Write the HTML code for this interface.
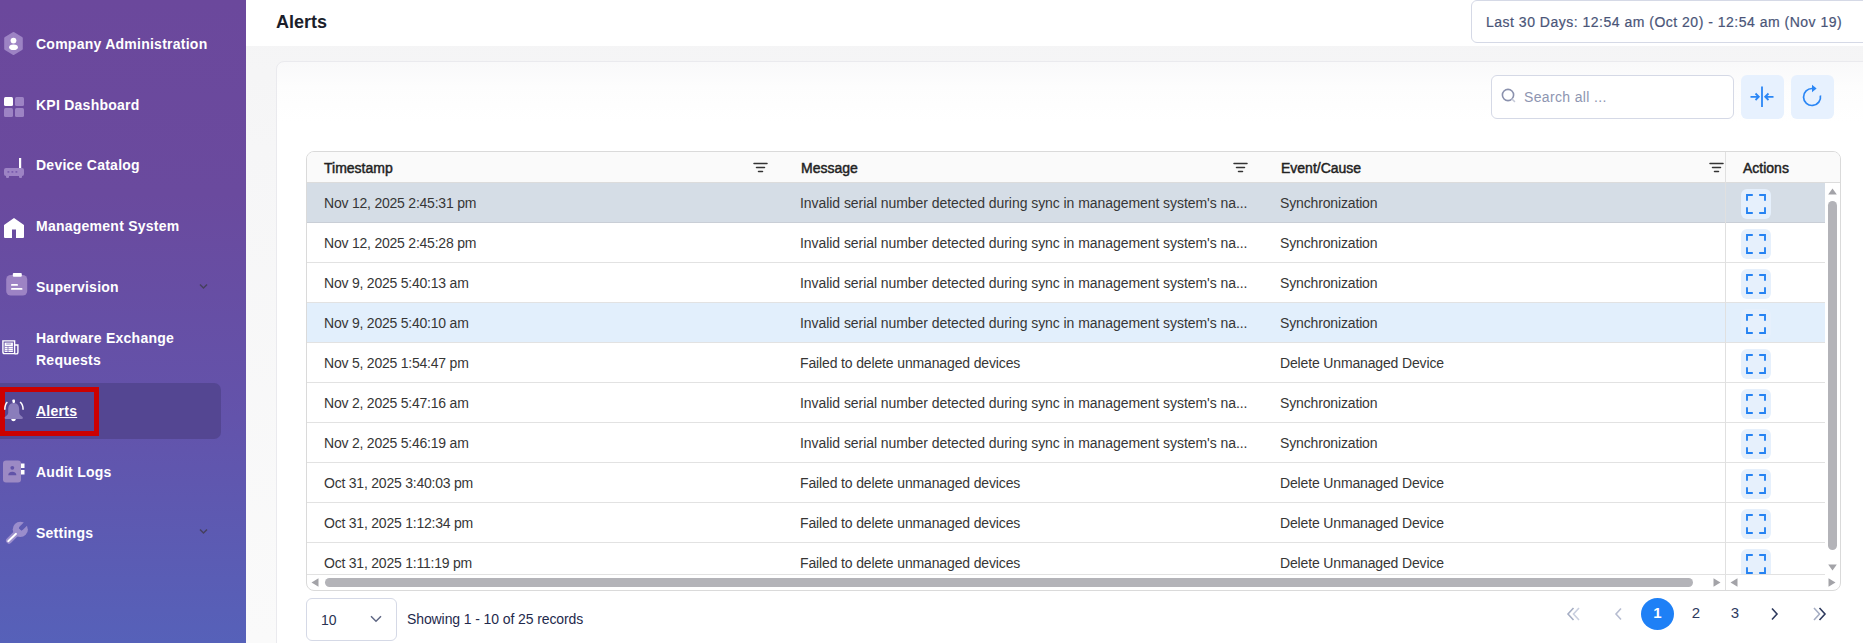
<!DOCTYPE html>
<html><head><meta charset="utf-8">
<style>
*{box-sizing:border-box;margin:0;padding:0}
html,body{width:1863px;height:643px;overflow:hidden;background:linear-gradient(180deg,#f4f4f5 0,#f6f6f7 150px,#fafafa 643px);font-family:"Liberation Sans",sans-serif}
.abs{position:absolute}
#sb{position:absolute;left:0;top:0;width:246px;height:643px;background:linear-gradient(180deg,#6b489c 0%,#6a4a9e 30%,#6353ab 65%,#5661b9 100%)}
.nav{position:absolute;left:36px;color:#fff;font-weight:bold;font-size:14px;line-height:22px;white-space:nowrap;letter-spacing:0.25px}
.ico{position:absolute}
#hdr{position:absolute;left:246px;top:0;width:1617px;height:46px;background:#fff}
#title{position:absolute;left:276px;top:11px;font-size:18px;font-weight:bold;color:#1b1e2b;line-height:22px}
#range{position:absolute;left:1471px;top:0;width:420px;height:43px;border:1px solid #d5d9e6;border-radius:6px;background:#fff;color:#4a5578;font-size:14px;line-height:42px;padding-left:14px;white-space:nowrap;letter-spacing:0.5px;-webkit-text-stroke:0.2px #4a5578}
#card{position:absolute;left:276px;top:61px;width:1620px;height:620px;background:linear-gradient(180deg,#f9f9fa 0,#fdfdfd 25px,#fff 60px);border:1px solid #eaeaee;border-radius:8px}
#search{position:absolute;left:1491px;top:75px;width:243px;height:44px;border:1px solid #d5d9e6;border-radius:6px;background:#fff}
.tbtn{position:absolute;top:75px;width:43px;height:44px;background:#e7f1fe;border-radius:6px}
#tbl{position:absolute;left:306px;top:151px;width:1535px;height:440px;border:1px solid #dadada;border-radius:8px;background:#fff;overflow:hidden}
.th{position:absolute;top:0;height:31px;background:#fafafa;border-bottom:1px solid #dcdcdc}
.tht{position:absolute;top:8px;font-size:14px;font-weight:normal;color:#222;line-height:16px;white-space:nowrap;letter-spacing:0;-webkit-text-stroke:0.45px #222}
.row{position:absolute;left:0;width:1518px;height:40px;border-bottom:1px solid #e2e2e2}
.cell{position:absolute;top:12px;font-size:14px;color:#363636;line-height:16px;white-space:nowrap}
.act{position:absolute;left:1434px;top:6px;width:30px;height:30px;background:#e6f0fc;border-radius:6px}
</style></head><body>
<div id="sb">
  <!-- Company Administration -->
  <svg class="ico" style="left:4px;top:32px" width="19" height="23" viewBox="0 0 19 23"><path d="M9.5 1.6 L17.3 6.2 V16.8 L9.5 21.4 L1.7 16.8 V6.2 Z" fill="#9d83c4" stroke="#9d83c4" stroke-linejoin="round" stroke-width="3"/><circle cx="9.5" cy="8.6" r="2.9" fill="#fff"/><ellipse cx="9.5" cy="15.2" rx="4.4" ry="2.8" fill="#fff"/></svg>
  <div class="nav" style="top:33px">Company Administration</div>
  <!-- KPI -->
  <svg class="ico" style="left:4px;top:97px" width="20" height="20" viewBox="0 0 20 20"><rect x="0" y="0" width="9" height="9" rx="1.5" fill="#fff"/><rect x="11" y="0" width="9" height="9" rx="1.5" fill="#9d83c4"/><rect x="0" y="11" width="9" height="9" rx="1.5" fill="#9d83c4"/><rect x="11" y="11" width="9" height="9" rx="1.5" fill="#9d83c4"/></svg>
  <div class="nav" style="top:94px">KPI Dashboard</div>
  <!-- Device -->
  <svg class="ico" style="left:4px;top:157px" width="20" height="22" viewBox="0 0 20 22"><rect x="15" y="1" width="2.2" height="10" fill="#fff"/><rect x="0" y="11" width="20" height="8" rx="2" fill="#9d83c4"/><rect x="2" y="18" width="3" height="3" rx="1" fill="#9d83c4"/><rect x="15" y="18" width="3" height="3" rx="1" fill="#9d83c4"/><rect x="3.5" y="14" width="1.8" height="1.8" fill="#7a5cae"/><rect x="7.5" y="14" width="1.8" height="1.8" fill="#7a5cae"/><rect x="11.5" y="14" width="1.8" height="1.8" fill="#7a5cae"/></svg>
  <div class="nav" style="top:154px">Device Catalog</div>
  <!-- Management -->
  <svg class="ico" style="left:4px;top:217px" width="20" height="21" viewBox="0 0 20 21"><path d="M10 1 L20 8 V20 Q20 21 19 21 H12 V12.5 H8 V21 H1 Q0 21 0 20 V8 Z" fill="#fff"/></svg>
  <div class="nav" style="top:215px">Management System</div>
  <!-- Supervision -->
  <svg class="ico" style="left:6px;top:273px" width="22" height="23" viewBox="0 0 22 23"><rect x="0.2" y="2" width="21" height="20.5" rx="4.5" fill="#9d83c4"/><rect x="6.8" y="0" width="9" height="3.8" rx="1" fill="#fff"/><rect x="5" y="11" width="7" height="1.8" rx="0.9" fill="#fff"/><rect x="5" y="15" width="11.5" height="1.8" rx="0.9" fill="#fff"/></svg>
  <div class="nav" style="top:276px">Supervision</div>
  <svg class="ico" style="left:199px;top:283px" width="9" height="7" viewBox="0 0 9 7"><path d="M1 1.5 L4.5 5 L8 1.5" fill="none" stroke="#46405e" stroke-width="1.5"/></svg>
  <!-- Hardware -->
  <svg class="ico" style="left:2px;top:340px" width="17" height="15" viewBox="0 0 17 15"><path d="M0.9 0.9 H12.6 V13.6 H2.4 Q0.9 13.6 0.9 12.1 Z" fill="none" stroke="#fff" stroke-width="1.4"/><path d="M12.6 5 H15.9 V12.4 Q15.9 13.9 14.4 13.9 H12.6" fill="none" stroke="#fff" stroke-width="1.4"/><rect x="2.6" y="2.6" width="8.3" height="9.4" fill="#fff"/><rect x="4.2" y="3.6" width="5" height="0.9" fill="#8d7bc0"/><rect x="2.6" y="6.1" width="8.3" height="0.7" fill="#7a68b3"/><rect x="2.6" y="8.1" width="8.3" height="0.7" fill="#9b8bc9"/><rect x="2.6" y="10.1" width="8.3" height="0.7" fill="#9b8bc9"/><rect x="5.6" y="6.1" width="0.8" height="6" fill="#7a68b3"/></svg>
  <div class="nav" style="top:327px">Hardware Exchange<br>Requests</div>
  <!-- Alerts active -->
  <div class="abs" style="left:0;top:383px;width:221px;height:56px;background:#544692;border-radius:0 7px 7px 0"></div>
  <div class="abs" style="left:0;top:387px;width:99px;height:49px;border:5px solid #cc0000"></div>
  <svg class="ico" style="left:0;top:396px" width="28" height="28" viewBox="0 0 28 28"><path d="M13.7 7 C9.5 7 8.2 10 8.2 14 V17 Q8 19 5.8 20.3 Q4.6 21 4.6 22 Q4.6 23 6 23 H21.5 Q22.9 23 22.9 22 Q22.9 21 21.6 20.3 Q19.4 19 19.2 17 V14 C19.2 10 17.9 7 13.7 7 Z" fill="#8a7dbb"/><rect x="12.4" y="3.5" width="2.6" height="3.4" rx="0.8" fill="#fff"/><path d="M11.1 23 H15.9 Q15.5 25.2 13.5 25.2 Q11.5 25.2 11.1 23 Z" fill="#fff"/><path d="M7.4 6.2 Q4.8 8.2 4.8 13.8" fill="none" stroke="#fff" stroke-width="1.5"/><path d="M20 6.2 Q23.1 8.2 23.1 13.8" fill="none" stroke="#fff" stroke-width="1.5"/></svg>
  <div class="nav" style="top:400px;text-decoration:underline">Alerts</div>
  <!-- Audit logs -->
  <svg class="ico" style="left:3px;top:460px" width="22" height="23" viewBox="0 0 22 23"><rect x="0" y="0.5" width="18" height="22" rx="3" fill="#9c8ac4"/><circle cx="9.3" cy="7.8" r="1.9" fill="#6153a8"/><path d="M5.2 15.3 Q5.4 11.8 9.3 11.8 Q13.2 11.8 13.4 15.3 Z" fill="#6153a8"/><rect x="18" y="3.5" width="3.5" height="4.5" fill="#fff"/><rect x="18" y="10" width="3.5" height="4.5" fill="#fff"/></svg>
  <div class="nav" style="top:461px">Audit Logs</div>
  <!-- Settings -->
  <svg class="ico" style="left:5px;top:521px" width="26" height="24" viewBox="0 0 26 24"><defs><mask id="wm" maskUnits="userSpaceOnUse" x="0" y="0" width="26" height="24"><rect x="0" y="0" width="26" height="24" fill="#fff"/><path d="M16.3 7.2 L25 -1.5" stroke="#000" stroke-width="4.6" stroke-linecap="round"/></mask></defs><circle cx="15.3" cy="8.4" r="7.6" fill="#9a8dcc" mask="url(#wm)"/><path d="M13 10.7 L4 19.7" stroke="#9a8dcc" stroke-width="6" stroke-linecap="round"/><path d="M3.2 20.2 L11 12.8" stroke="#fff" stroke-width="1.9" stroke-linecap="round"/></svg>
  <div class="nav" style="top:522px">Settings</div>
  <svg class="ico" style="left:199px;top:528px" width="9" height="7" viewBox="0 0 9 7"><path d="M1 1.5 L4.5 5 L8 1.5" fill="none" stroke="#46405e" stroke-width="1.5"/></svg>
</div>

<div id="hdr"></div>
<div id="title">Alerts</div>
<div id="range">Last 30 Days: 12:54 am (Oct 20) - 12:54 am (Nov 19)</div>

<div id="card"></div>
<div id="search">
  <svg class="ico" style="left:9px;top:12px" width="17" height="17" viewBox="0 0 17 17"><circle cx="7" cy="7" r="5.6" fill="none" stroke="#8a91ad" stroke-width="1.6"/><path d="M11.2 11.2 L13.5 13.5" stroke="#c5c9d8" stroke-width="1.6" stroke-linecap="round"/></svg>
  <div class="abs" style="left:32px;top:13px;font-size:14px;color:#8e95b1;line-height:16px;letter-spacing:0.35px">Search all ...</div>
</div>
<div class="tbtn" style="left:1741px">
  <svg class="ico" style="left:8px;top:10px" width="26" height="24" viewBox="0 0 26 24"><path d="M13 1.5 V22" stroke="#2a86f5" stroke-width="1.8"/><path d="M1.5 11.8 H9.5 M6.5 8.5 L9.8 11.8 L6.5 15" fill="none" stroke="#2a86f5" stroke-width="1.8"/><path d="M24.5 11.8 H16.5 M19.5 8.5 L16.2 11.8 L19.5 15" fill="none" stroke="#2a86f5" stroke-width="1.8"/></svg>
</div>
<div class="tbtn" style="left:1791px">
  <svg class="ico" style="left:11px;top:9px" width="22" height="24" viewBox="0 0 22 24"><path d="M10.5 4.5 A8.5 8.5 0 1 0 18.4 11.5" fill="none" stroke="#2a86f5" stroke-width="1.7"/><path d="M10 0.8 L14.6 4.5 L10 8.2 Z" fill="#2a86f5"/></svg>
</div>

<div id="tbl">
  <div class="th" style="left:0;width:1533px"></div>
  <div class="abs" style="left:1418px;top:0;width:1px;height:440px;background:#e0e0e0"></div>
  <div class="tht" style="left:17px">Timestamp</div>
  <div class="tht" style="left:494px">Message</div>
  <div class="tht" style="left:974px">Event/Cause</div>
  <div class="tht" style="left:1436px">Actions</div>
  <svg class="ico" style="left:446px;top:9px" width="15" height="12" viewBox="0 0 15 12"><path d="M1 2.6 H14 M3.5 6.6 H11.5 M5.5 10.6 H9.5" stroke="#333" stroke-width="1.5" stroke-linecap="round"/></svg>
  <svg class="ico" style="left:926px;top:9px" width="15" height="12" viewBox="0 0 15 12"><path d="M1 2.6 H14 M3.5 6.6 H11.5 M5.5 10.6 H9.5" stroke="#333" stroke-width="1.5" stroke-linecap="round"/></svg>
  <svg class="ico" style="left:1402px;top:9px" width="15" height="12" viewBox="0 0 15 12"><path d="M1 2.6 H14 M3.5 6.6 H11.5 M5.5 10.6 H9.5" stroke="#333" stroke-width="1.5" stroke-linecap="round"/></svg>
  <div id="rows" style="position:absolute;left:0;top:31px;width:1518px;height:392px;overflow:hidden;border-bottom:1px solid #e2e2e2"><div class="row" style="top:0px;background:#d5dde6;border-bottom-color:#c9ced6;"><div class="cell" style="left:17px;letter-spacing:-0.22px">Nov 12, 2025 2:45:31 pm</div><div class="cell" style="left:493px;letter-spacing:-0.06px">Invalid serial number detected during sync in management system's na...</div><div class="cell" style="left:973px;letter-spacing:-0.15px">Synchronization</div><div class="abs" style="left:1418px;top:0;width:1px;height:40px;background:#e0e0e0"></div><div class="act"><svg class="ico" style="left:5px;top:5px" width="20" height="20" viewBox="0 0 20 20"><path d="M1 6.8 V1 H6.8 M13.2 1 H19 V6.8 M19 13.2 V19 H13.2 M6.8 19 H1 V13.2" fill="none" stroke="#2582f2" stroke-width="1.9"/></svg></div></div><div class="row" style="top:40px;background:#fff;"><div class="cell" style="left:17px;letter-spacing:-0.22px">Nov 12, 2025 2:45:28 pm</div><div class="cell" style="left:493px;letter-spacing:-0.06px">Invalid serial number detected during sync in management system's na...</div><div class="cell" style="left:973px;letter-spacing:-0.15px">Synchronization</div><div class="abs" style="left:1418px;top:0;width:1px;height:40px;background:#e0e0e0"></div><div class="act"><svg class="ico" style="left:5px;top:5px" width="20" height="20" viewBox="0 0 20 20"><path d="M1 6.8 V1 H6.8 M13.2 1 H19 V6.8 M19 13.2 V19 H13.2 M6.8 19 H1 V13.2" fill="none" stroke="#2582f2" stroke-width="1.9"/></svg></div></div><div class="row" style="top:80px;background:#fff;"><div class="cell" style="left:17px;letter-spacing:-0.22px">Nov 9, 2025 5:40:13 am</div><div class="cell" style="left:493px;letter-spacing:-0.06px">Invalid serial number detected during sync in management system's na...</div><div class="cell" style="left:973px;letter-spacing:-0.15px">Synchronization</div><div class="abs" style="left:1418px;top:0;width:1px;height:40px;background:#e0e0e0"></div><div class="act"><svg class="ico" style="left:5px;top:5px" width="20" height="20" viewBox="0 0 20 20"><path d="M1 6.8 V1 H6.8 M13.2 1 H19 V6.8 M19 13.2 V19 H13.2 M6.8 19 H1 V13.2" fill="none" stroke="#2582f2" stroke-width="1.9"/></svg></div></div><div class="row" style="top:120px;background:#e2effc;"><div class="cell" style="left:17px;letter-spacing:-0.22px">Nov 9, 2025 5:40:10 am</div><div class="cell" style="left:493px;letter-spacing:-0.06px">Invalid serial number detected during sync in management system's na...</div><div class="cell" style="left:973px;letter-spacing:-0.15px">Synchronization</div><div class="abs" style="left:1418px;top:0;width:1px;height:40px;background:#e0e0e0"></div><div class="act"><svg class="ico" style="left:5px;top:5px" width="20" height="20" viewBox="0 0 20 20"><path d="M1 6.8 V1 H6.8 M13.2 1 H19 V6.8 M19 13.2 V19 H13.2 M6.8 19 H1 V13.2" fill="none" stroke="#2582f2" stroke-width="1.9"/></svg></div></div><div class="row" style="top:160px;background:#fff;"><div class="cell" style="left:17px;letter-spacing:-0.22px">Nov 5, 2025 1:54:47 pm</div><div class="cell" style="left:493px;letter-spacing:-0.14px">Failed to delete unmanaged devices</div><div class="cell" style="left:973px;letter-spacing:-0.15px">Delete Unmanaged Device</div><div class="abs" style="left:1418px;top:0;width:1px;height:40px;background:#e0e0e0"></div><div class="act"><svg class="ico" style="left:5px;top:5px" width="20" height="20" viewBox="0 0 20 20"><path d="M1 6.8 V1 H6.8 M13.2 1 H19 V6.8 M19 13.2 V19 H13.2 M6.8 19 H1 V13.2" fill="none" stroke="#2582f2" stroke-width="1.9"/></svg></div></div><div class="row" style="top:200px;background:#fff;"><div class="cell" style="left:17px;letter-spacing:-0.22px">Nov 2, 2025 5:47:16 am</div><div class="cell" style="left:493px;letter-spacing:-0.06px">Invalid serial number detected during sync in management system's na...</div><div class="cell" style="left:973px;letter-spacing:-0.15px">Synchronization</div><div class="abs" style="left:1418px;top:0;width:1px;height:40px;background:#e0e0e0"></div><div class="act"><svg class="ico" style="left:5px;top:5px" width="20" height="20" viewBox="0 0 20 20"><path d="M1 6.8 V1 H6.8 M13.2 1 H19 V6.8 M19 13.2 V19 H13.2 M6.8 19 H1 V13.2" fill="none" stroke="#2582f2" stroke-width="1.9"/></svg></div></div><div class="row" style="top:240px;background:#fff;"><div class="cell" style="left:17px;letter-spacing:-0.22px">Nov 2, 2025 5:46:19 am</div><div class="cell" style="left:493px;letter-spacing:-0.06px">Invalid serial number detected during sync in management system's na...</div><div class="cell" style="left:973px;letter-spacing:-0.15px">Synchronization</div><div class="abs" style="left:1418px;top:0;width:1px;height:40px;background:#e0e0e0"></div><div class="act"><svg class="ico" style="left:5px;top:5px" width="20" height="20" viewBox="0 0 20 20"><path d="M1 6.8 V1 H6.8 M13.2 1 H19 V6.8 M19 13.2 V19 H13.2 M6.8 19 H1 V13.2" fill="none" stroke="#2582f2" stroke-width="1.9"/></svg></div></div><div class="row" style="top:280px;background:#fff;"><div class="cell" style="left:17px;letter-spacing:-0.22px">Oct 31, 2025 3:40:03 pm</div><div class="cell" style="left:493px;letter-spacing:-0.14px">Failed to delete unmanaged devices</div><div class="cell" style="left:973px;letter-spacing:-0.15px">Delete Unmanaged Device</div><div class="abs" style="left:1418px;top:0;width:1px;height:40px;background:#e0e0e0"></div><div class="act"><svg class="ico" style="left:5px;top:5px" width="20" height="20" viewBox="0 0 20 20"><path d="M1 6.8 V1 H6.8 M13.2 1 H19 V6.8 M19 13.2 V19 H13.2 M6.8 19 H1 V13.2" fill="none" stroke="#2582f2" stroke-width="1.9"/></svg></div></div><div class="row" style="top:320px;background:#fff;"><div class="cell" style="left:17px;letter-spacing:-0.22px">Oct 31, 2025 1:12:34 pm</div><div class="cell" style="left:493px;letter-spacing:-0.14px">Failed to delete unmanaged devices</div><div class="cell" style="left:973px;letter-spacing:-0.15px">Delete Unmanaged Device</div><div class="abs" style="left:1418px;top:0;width:1px;height:40px;background:#e0e0e0"></div><div class="act"><svg class="ico" style="left:5px;top:5px" width="20" height="20" viewBox="0 0 20 20"><path d="M1 6.8 V1 H6.8 M13.2 1 H19 V6.8 M19 13.2 V19 H13.2 M6.8 19 H1 V13.2" fill="none" stroke="#2582f2" stroke-width="1.9"/></svg></div></div><div class="row" style="top:360px;background:#fff;"><div class="cell" style="left:17px;letter-spacing:-0.22px">Oct 31, 2025 1:11:19 pm</div><div class="cell" style="left:493px;letter-spacing:-0.14px">Failed to delete unmanaged devices</div><div class="cell" style="left:973px;letter-spacing:-0.15px">Delete Unmanaged Device</div><div class="abs" style="left:1418px;top:0;width:1px;height:40px;background:#e0e0e0"></div><div class="act"><svg class="ico" style="left:5px;top:5px" width="20" height="20" viewBox="0 0 20 20"><path d="M1 6.8 V1 H6.8 M13.2 1 H19 V6.8 M19 13.2 V19 H13.2 M6.8 19 H1 V13.2" fill="none" stroke="#2582f2" stroke-width="1.9"/></svg></div></div></div>
</div>

<!-- scrollbars -->
<div id="vscroll" class="abs" style="left:1825px;top:183px;width:15px;height:391px;background:#fff">
  <svg class="ico" style="left:3px;top:5px" width="9" height="7" viewBox="0 0 9 7"><path d="M4.5 0.5 L8.8 6.5 H0.2 Z" fill="#a3a3a8"/></svg>
  <div class="abs" style="left:3px;top:18px;width:9px;height:349px;background:#b3b3b8;border-radius:4.5px"></div>
  <svg class="ico" style="left:3px;top:381px" width="9" height="7" viewBox="0 0 9 7"><path d="M4.5 6.5 L8.8 0.5 H0.2 Z" fill="#a3a3a8"/></svg>
</div>
<div id="hscroll" class="abs" style="left:307px;top:575px;width:1418px;height:15px">
  <svg class="ico" style="left:4px;top:3px" width="8" height="9" viewBox="0 0 8 9"><path d="M0.5 4.5 L7.5 0.2 V8.8 Z" fill="#a3a3a8"/></svg>
  <div class="abs" style="left:18px;top:3px;width:1368px;height:9px;background:#b3b3b8;border-radius:4.5px"></div>
  <svg class="ico" style="left:1406px;top:3px" width="8" height="9" viewBox="0 0 8 9"><path d="M7.5 4.5 L0.5 0.2 V8.8 Z" fill="#a3a3a8"/></svg>
</div>
<div id="hscroll2" class="abs" style="left:1726px;top:575px;width:99px;height:15px">
  <svg class="ico" style="left:4px;top:3px" width="8" height="9" viewBox="0 0 8 9"><path d="M0.5 4.5 L7.5 0.2 V8.8 Z" fill="#a3a3a8"/></svg>
</div>
<svg class="ico" style="left:1828px;top:578px" width="8" height="9" viewBox="0 0 8 9"><path d="M7.5 4.5 L0.5 0.2 V8.8 Z" fill="#a3a3a8"/></svg>

<!-- footer -->
<div id="psize" class="abs" style="left:306px;top:598px;width:91px;height:43px;border:1px solid #d5d9e6;border-radius:6px;background:#fff">
  <div class="abs" style="left:14px;top:13px;font-size:14px;color:#2a3352;line-height:16px">10</div>
  <svg class="ico" style="left:63px;top:16px" width="12" height="8" viewBox="0 0 12 8"><path d="M1 1.2 L6 6.2 L11 1.2" fill="none" stroke="#5f6784" stroke-width="1.5"/></svg>
</div>
<div class="abs" style="left:407px;top:611px;font-size:14px;color:#1f2a4d;line-height:16px;white-space:nowrap;letter-spacing:-0.1px">Showing 1 - 10 of 25 records</div>
<div id="pager">
  <svg class="ico" style="left:1566px;top:607px" width="16" height="14" viewBox="0 0 16 14"><path d="M7.5 1 L2 7 L7.5 13" fill="none" stroke="#a6aec4" stroke-width="1.6"/><path d="M13 1 L7.5 7 L13 13" fill="none" stroke="#c9cfdf" stroke-width="1.6"/></svg>
  <svg class="ico" style="left:1614px;top:607px" width="9" height="14" viewBox="0 0 9 14"><path d="M7 1.5 L2 7 L7 12.5" fill="none" stroke="#b7bdd1" stroke-width="1.6"/></svg>
  <div class="abs" style="left:1641px;top:598px;width:33px;height:32px;border-radius:50%;background:#1e80f6"></div><div class="abs" style="left:1641px;top:597px;width:33px;height:33px;color:#fff;font-size:15px;font-weight:bold;line-height:31px;text-align:center">1</div>
  <div class="abs" style="left:1681px;top:597px;width:30px;height:33px;color:#2e3a5e;font-size:15px;line-height:31px;text-align:center">2</div>
  <div class="abs" style="left:1720px;top:597px;width:30px;height:33px;color:#2e3a5e;font-size:15px;line-height:31px;text-align:center">3</div>
  <svg class="ico" style="left:1770px;top:607px" width="9" height="14" viewBox="0 0 9 14"><path d="M2 1.5 L7 7 L2 12.5" fill="none" stroke="#2e3a5e" stroke-width="1.6"/></svg>
  <svg class="ico" style="left:1811px;top:607px" width="16" height="14" viewBox="0 0 16 14"><path d="M3 1 L8.5 7 L3 13" fill="none" stroke="#a6aec4" stroke-width="1.6"/><path d="M8.5 1 L14 7 L8.5 13" fill="none" stroke="#2e3a5e" stroke-width="1.6"/></svg>
</div>
</body></html>
